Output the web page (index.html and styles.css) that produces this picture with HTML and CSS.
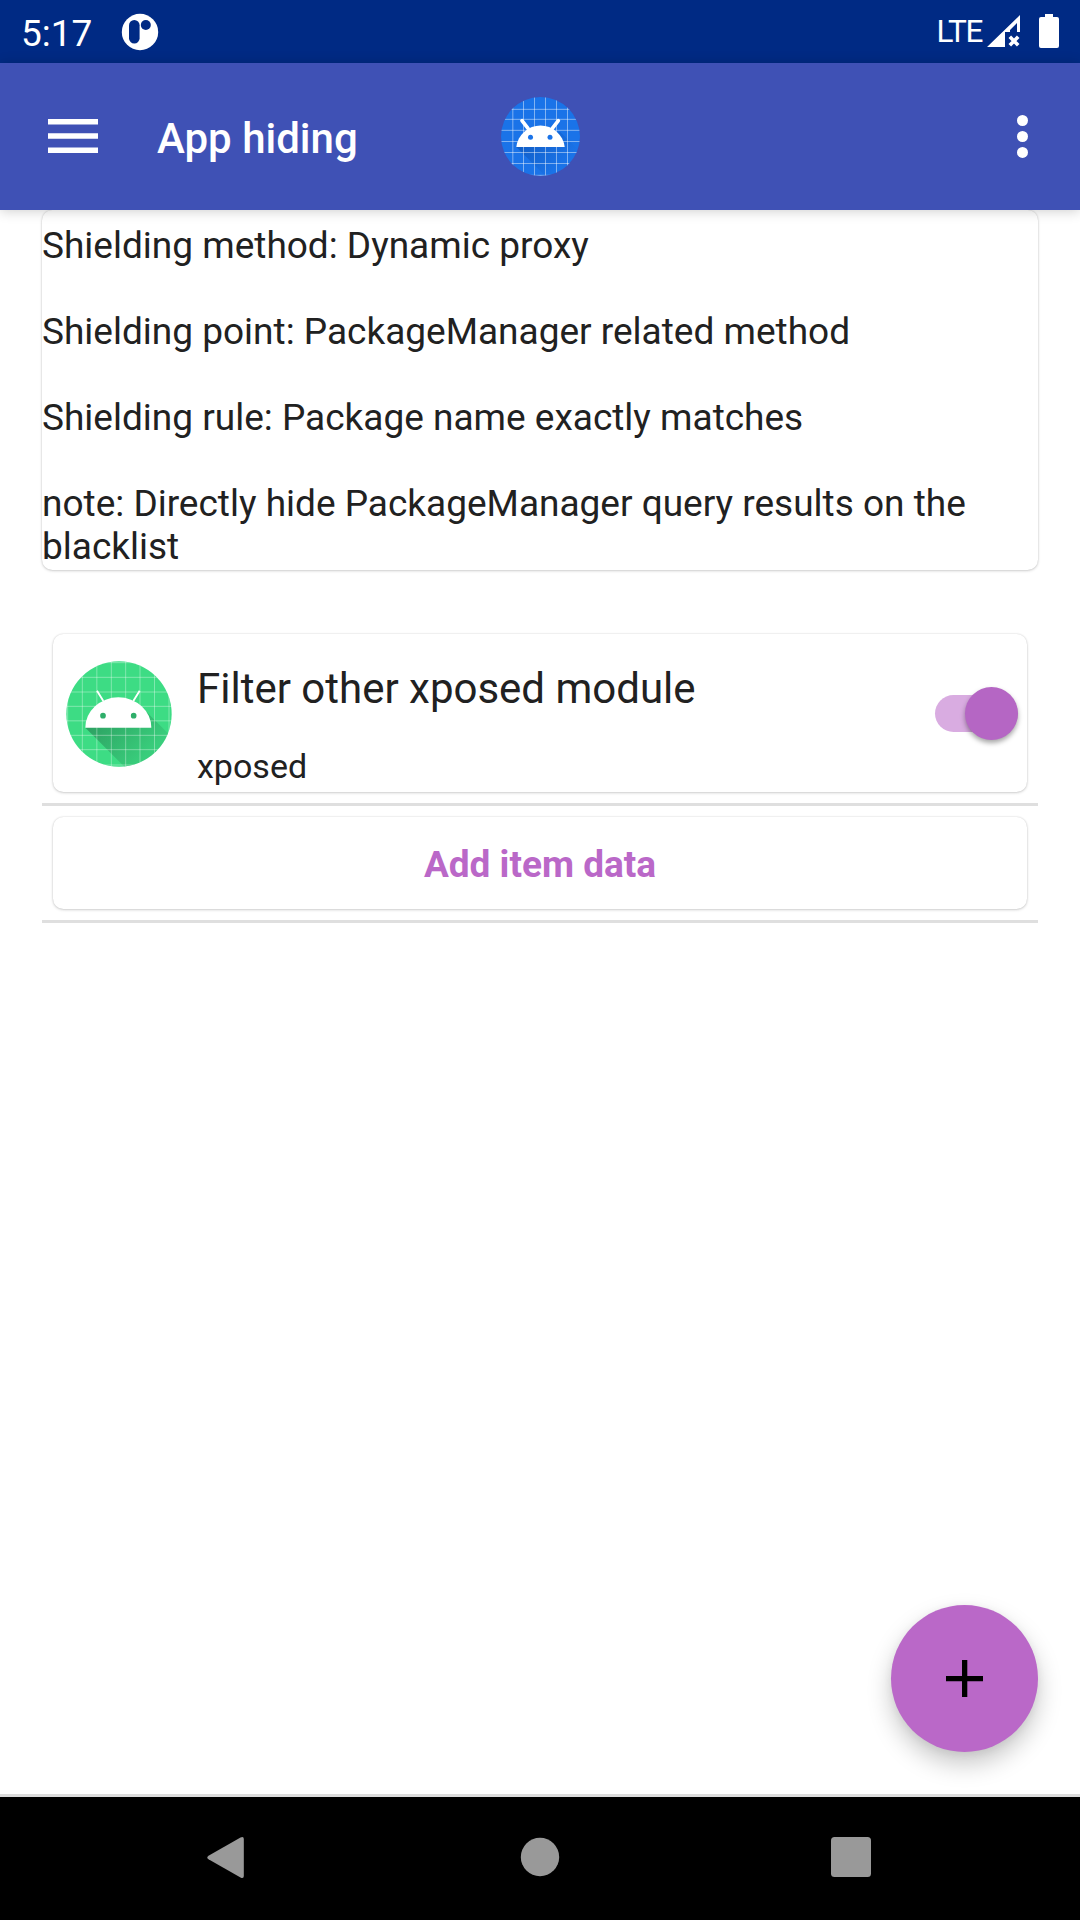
FILE: index.html
```html
<!DOCTYPE html>
<html lang="en">
<head>
<meta charset="utf-8">
<title>App hiding</title>
<link rel="stylesheet" href="styles.css">
</head>
<body>
<div class="screen">
  <header class="status">
    <span class="clock">5:17</span>
    <svg class="notice" width="38" height="38" viewBox="0 0 38 38">
      <circle cx="19" cy="19" r="18.2" fill="#fff"/>
      <rect x="8" y="7" width="10.6" height="23.5" rx="5.3" fill="#002a84"/>
      <circle cx="24.8" cy="12" r="5" fill="#002a84"/>
    </svg>
    <span class="network">LTE</span>
    <svg class="signal" width="34" height="33" viewBox="0 0 34 33">
      <path d="M33 0V17H30V8L23 15V17H18V32H0Z" fill="#fff"/>
      <path d="M22.8 21.8L31.2 30.2M31.2 21.8L22.8 30.2" stroke="#fff" stroke-width="3.6"/>
    </svg>
    <svg class="battery" width="20" height="34" viewBox="0 0 20 34">
      <path d="M6 0H14V3H18Q20 3 20 5V32Q20 34 18 34H2Q0 34 0 32V5Q0 3 2 3H6Z" fill="#fff"/>
    </svg>
  </header>

  <nav class="toolbar">
    <svg class="menu" width="50" height="34" viewBox="0 0 50 34">
      <path d="M0 0H50V5.5H0ZM0 14.2H50V19.7H0ZM0 28.4H50V33.9H0Z" fill="#fff"/>
    </svg>
    <h1 class="title">App hiding</h1>
    <svg class="logo" width="79" height="79" viewBox="63 51 237 237">
      <defs>
        <clipPath id="blue-clip"><circle cx="181.500" cy="169.500" r="118.500"/></clipPath>
        <linearGradient id="blue-shade" x1="120" y1="190" x2="215" y2="285" gradientUnits="userSpaceOnUse">
          <stop offset="0" stop-color="#0b4fb0" stop-opacity=".6"/>
          <stop offset="1" stop-color="#0b4fb0" stop-opacity="0"/>
        </linearGradient>
      </defs>
      <g clip-path="url(#blue-clip)">
        <rect x="63" y="51" width="237" height="237" fill="#1a73e8"/>
        <path d="M109 201L200 292H300V215L240 155Z" fill="url(#blue-shade)"/>
        <path d="M98.500 51V288M130.500 51V288M163.500 51V288M196.500 51V288M229.500 51V288M262.500 51V288M63 88H300M63 118H300M63 151H300M63 184.500H300M63 217.500H300M63 250.500H300M63 286H300" fill="none" stroke="#fff" stroke-opacity=".45" stroke-width="3"/>
        <path d="M109 201A73 73 0 0 1 254 201Z" fill="#fff"/>
        <path d="M126 122L144 145M235 122L217 145" stroke="#fff" stroke-width="11" stroke-linecap="round"/>
        <circle cx="151.500" cy="172" r="7.500" fill="#1a73e8"/><circle cx="210" cy="172" r="7.500" fill="#1a73e8"/>
      </g>
    </svg>
    <svg class="more" width="11" height="43" viewBox="0 0 11 43">
      <g fill="#fff"><circle cx="5.500" cy="5.500" r="5.500"/><circle cx="5.500" cy="21.500" r="5.500"/><circle cx="5.500" cy="37.400" r="5.500"/></g>
    </svg>
  </nav>

  <main class="content">
    <section class="card info">
      <p>Shielding method: Dynamic proxy</p>
      <p>Shielding point: PackageManager related method</p>
      <p>Shielding rule: Package name exactly matches</p>
      <p>note: Directly hide PackageManager query results on the blacklist</p>
    </section>

    <section class="list">
      <div class="row">
        <div class="card item">
          <svg class="avatar" width="106" height="106" viewBox="77 121 318 318">
            <defs>
              <clipPath id="green-clip"><circle cx="236" cy="280" r="158"/></clipPath>
              <linearGradient id="green-shade" x1="170" y1="290" x2="300" y2="420" gradientUnits="userSpaceOnUse">
                <stop offset="0" stop-color="#2da162"/>
                <stop offset="1" stop-color="#2da162" stop-opacity=".25"/>
              </linearGradient>
            </defs>
            <g clip-path="url(#green-clip)">
              <rect x="77" y="121" width="318" height="318" fill="#3ddc84"/>
              <path d="M135 321L255 441H395V350L312 267Z" fill="url(#green-shade)"/>
              <path d="M82 121V439M126 121V439M169.500 121V439M213 121V439M256 121V439M299 121V439M342.500 121V439M386 121V439M77 126H395M77 170H395M77 214H395M77 257H395M77 300.500H395M77 344H395M77 387H395M77 433H395" fill="none" stroke="#fff" stroke-opacity=".35" stroke-width="3"/>
              <path d="M135 321A99 91 0 0 1 333 321Z" fill="#fff"/>
              <path d="M170 210L189 241M298 210L279 241" stroke="#fff" stroke-width="5.500"/>
              <circle cx="188" cy="285" r="8.500" fill="#2fae6a"/><circle cx="280" cy="285" r="8.500" fill="#2fae6a"/>
            </g>
          </svg>
          <div class="labels">
            <div class="name">Filter other xposed module</div>
            <div class="package">xposed</div>
          </div>
          <div class="switch"><div class="thumb"></div></div>
        </div>
      </div>
      <div class="row">
        <div class="card add">Add item data</div>
      </div>
    </section>

    <div class="fab">
      <svg width="37" height="37" viewBox="0 0 37 37"><path d="M16 0H21.300V16H37V21.300H21.300V37H16V21.300H0V16H16Z"/></svg>
    </div>
  </main>

  <footer class="navbar">
    <svg width="42" height="43" viewBox="0 0 42 43"><path d="M2.500 19.700L34.500 1.500Q37.800 0 37.800 3V40Q37.800 43 34.500 41.500L2.500 23.300Q0 21.500 2.500 19.700Z" fill="#999"/></svg>
    <svg width="40" height="40" viewBox="0 0 40 40"><circle cx="20" cy="20" r="19.200" fill="#999"/></svg>
    <svg width="40" height="40" viewBox="0 0 40 40"><rect width="40" height="40" rx="3.500" fill="#999"/></svg>
  </footer>
</div>
</body>
</html>
```
FILE: styles.css
```css
* { box-sizing: border-box; }

body {
  margin: 0;
  background: #fff;
  color: #212121;
  font-family: Roboto, "Noto Sans", sans-serif;
}

p, h1 { margin: 0; }
svg { display: block; flex: none; }

.screen {
  display: flex;
  flex-direction: column;
  width: 1080px;
  height: 1920px;
  overflow: hidden;
}

.status {
  display: flex;
  align-items: flex-start;
  height: 63px;
  padding: 0 21px;
  background: #002a84;
  color: #fff;
}
.clock {
  width: 100px;
  padding-top: 12px;
  font-size: 37px;
  line-height: 43px;
}
.notice { margin-top: 13px; }
.network {
  margin: 13px 5px 0 auto;
  font-size: 31.5px;
  line-height: 37px;
  letter-spacing: -1.3px;
}
.signal { margin: 15px 18px 0 0; }
.battery { margin-top: 14px; }

.toolbar {
  position: relative;
  z-index: 1;
  display: grid;
  grid-template-columns: 109px 344px 1fr auto;
  align-items: start;
  height: 147px;
  padding: 0 52px 0 48px;
  background: #3f51b5;
  color: #fff;
  box-shadow: 0 1px 12px rgba(0, 0, 0, 0.2);
}
.menu { margin-top: 56px; }
.title {
  padding-top: 51px;
  font-size: 42px;
  font-weight: 500;
  line-height: 49px;
}
.logo { margin-top: 34px; }
.more { margin-top: 52px; }

.content {
  display: flex;
  flex-direction: column;
  flex: 1;
  padding: 0 42px 42px;
  border-bottom: 3px solid #dcdcdc;
}

.card {
  border-radius: 10.5px;
  background: #fff;
  box-shadow: 0 0 2px rgba(0, 0, 0, 0.14), 0 1px 3px rgba(0, 0, 0, 0.17);
}

.info {
  display: flex;
  flex-direction: column;
  gap: 43px;
  height: 360px;
  padding-top: 14px;
  font-size: 37px;
  line-height: 43px;
}

.list { margin-top: 53px; }
.row {
  padding: 11px 11px;
  border-bottom: 3px solid #dfdfdf;
}
.item {
  display: flex;
  align-items: center;
  height: 158px;
  padding: 1px 9px 0 13px;
}
.labels {
  flex: 1;
  align-self: flex-start;
  margin-left: 25px;
  padding-top: 29px;
}
.name {
  font-size: 42px;
  line-height: 49px;
}
.package {
  margin-top: 33px;
  font-size: 34px;
  line-height: 40px;
}
.switch {
  display: flex;
  align-items: center;
  justify-content: flex-end;
  width: 83px;
  height: 37px;
  border-radius: 19px;
  background: #d9ace1;
}
.thumb {
  flex: none;
  width: 53px;
  height: 53px;
  border-radius: 50%;
  background: #b566c4;
  box-shadow: 0 3px 5px rgba(0, 0, 0, 0.35);
}
.add {
  height: 92px;
  color: #ba68c8;
  font-size: 37px;
  font-weight: 700;
  line-height: 95px;
  text-align: center;
}

.fab {
  display: grid;
  place-items: center;
  align-self: flex-end;
  width: 147px;
  height: 147px;
  margin-top: auto;
  border-radius: 50%;
  background: #ba68c8;
  box-shadow: 0 12px 24px rgba(0, 0, 0, 0.22), 0 2px 8px rgba(0, 0, 0, 0.06);
}

.navbar {
  display: flex;
  align-items: center;
  justify-content: space-between;
  height: 123px;
  padding: 0 209px 3px 206px;
  background: #000;
}
```
